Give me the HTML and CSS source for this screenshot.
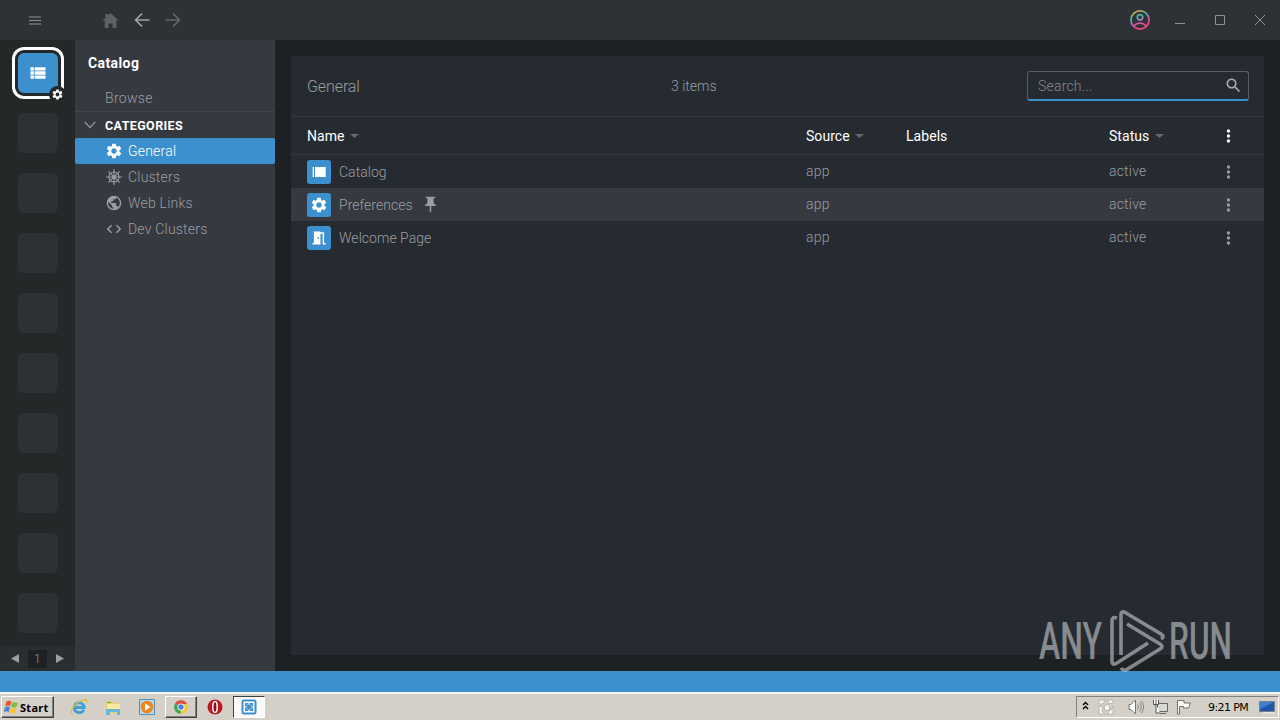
FILE: index.html
```
<!DOCTYPE html>
<html lang="en">
<head>
    <meta charset="UTF-8">
    <title>Catalog</title>
    <link rel="stylesheet" href="styles.css">
</head>
<body>
    <svg class="sprite">
        <symbol id="gear" viewBox="1.500 1.500 21 21"><path d="M19.14 12.94c.04-.3.06-.61.06-.94 0-.32-.02-.64-.07-.94l2.03-1.58c.18-.14.23-.41.12-.61l-1.92-3.32c-.12-.22-.37-.29-.59-.22l-2.39.96c-.5-.38-1.03-.7-1.62-.94l-.36-2.54c-.04-.24-.24-.41-.48-.41h-3.84c-.24 0-.43.17-.47.41l-.36 2.54c-.59.24-1.13.57-1.62.94l-2.39-.96c-.22-.08-.47 0-.59.22L2.74 8.87c-.12.21-.08.47.12.61l2.03 1.58c-.05.3-.09.63-.09.94s.02.64.07.94l-2.03 1.58c-.18.14-.23.41-.12.61l1.92 3.32c.12.22.37.29.59.22l2.39-.96c.5.38 1.03.7 1.62.94l.36 2.54c.05.24.24.41.48.41h3.84c.24 0 .44-.17.47-.41l.36-2.54c.59-.24 1.13-.56 1.62-.94l2.39.96c.22.08.47 0 .59-.22l1.92-3.32c.12-.22.07-.47-.12-.61l-2.01-1.58zM12 15.6c-1.98 0-3.6-1.62-3.6-3.6s1.62-3.6 3.6-3.6 3.6 1.62 3.6 3.6-1.62 3.6-3.6 3.6z"/></symbol>
        <symbol id="list" viewBox="0 0 24 24"><path d="M3 14h4v-4H3v4zm0 5h4v-4H3v4zM3 9h4V5H3v4zm5 5h13v-4H8v4zm0 5h13v-4H8v4zM8 5v4h13V5H8z"/></symbol>
        <symbol id="dots" viewBox="0 0 24 24"><circle cx="12.700" cy="4.500" r="2.500"/><circle cx="12.700" cy="12" r="2.500"/><circle cx="12.700" cy="19.500" r="2.500"/></symbol>
        <symbol id="sort" viewBox="0 0 9 4"><path d="M0 0h9L4.500 4z"/></symbol>
    </svg>

    <header class="topbar">
        <svg class="menu" viewBox="0 0 12 9"><path d="M0 1h12M0 4.500h12M0 8h12"/></svg>
        <svg class="home" viewBox="0 0 16 15"><path d="M8 0l8 7.500h-2.200V15H10v-4.500H6V15H2.200V7.500H0L3 4.700V1h2.500v1.400z"/></svg>
        <svg class="arrow" viewBox="0 0 16 14"><path d="M8 .6L1.500 7 8 13.400M1.500 7H15.500"/></svg>
        <svg class="arrow off" viewBox="0 0 16 14"><path d="M8 .6L14.500 7 8 13.400M14.500 7H.5"/></svg>
        <div class="window-buttons">
            <svg class="user" viewBox="0 0 20 20">
                <defs>
                    <linearGradient id="rainbow" x1="4" y1="0" x2="12" y2="20" gradientUnits="userSpaceOnUse">
                        <stop offset="0" stop-color="#e0a050"/>
                        <stop offset=".15" stop-color="#b9a860"/>
                        <stop offset=".35" stop-color="#35b5a5"/>
                        <stop offset=".55" stop-color="#a777b5"/>
                        <stop offset=".8" stop-color="#f23f8c"/>
                        <stop offset="1" stop-color="#f04d75"/>
                    </linearGradient>
                </defs>
                <circle cx="10" cy="10" r="9.100"/>
                <circle cx="10" cy="7.300" r="2.700"/>
                <path d="M3.800 15.800c3.400-3.600 9-3.600 12.400 0"/>
            </svg>
            <svg class="win" viewBox="0 0 12 12"><path d="M1 9.500h10"/></svg>
            <svg class="win" viewBox="0 0 12 12"><path d="M1.500 1.500h9v9h-9z"/></svg>
            <svg class="win" viewBox="0 0 12 12"><path d="M1 1l10 10M11 1L1 11"/></svg>
        </div>
    </header>

    <div class="middle">
        <aside class="hotbar">
            <div class="cells">
                <div class="cell active">
                    <svg><use href="#list"/></svg>
                    <span class="badge"><svg><use href="#gear"/></svg></span>
                </div>
                <div class="cell"></div>
                <div class="cell"></div>
                <div class="cell"></div>
                <div class="cell"></div>
                <div class="cell"></div>
                <div class="cell"></div>
                <div class="cell"></div>
                <div class="cell"></div>
                <div class="cell"></div>
            </div>
            <div class="pager">
                <svg viewBox="0 0 8 9"><path d="M8 0v9L0 4.500z"/></svg>
                <span>1</span>
                <svg viewBox="0 0 8 9"><path d="M0 0v9l8-4.500z"/></svg>
            </div>
        </aside>

        <nav class="sidebar">
            <h2>Catalog</h2>
            <div class="browse">Browse</div>
            <div class="group">
                <svg viewBox="0 0 12 8"><path d="M.8 1L6 6.500 11.200 1"/></svg>
                <span>CATEGORIES</span>
            </div>
            <div class="item selected"><svg><use href="#gear"/></svg><span>General</span></div>
            <div class="item">
                <svg class="wheel" viewBox="0 0 24 24">
                    <circle cx="12" cy="12" r="7.500"/>
                    <circle cx="12" cy="12" r="1.800"/>
                    <path d="M12 0v24M0 12h24M3.500 3.500l17 17M20.500 3.500l-17 17"/>
                </svg>
                <span>Clusters</span>
            </div>
            <div class="item">
                <svg viewBox="1 1 22 22"><path d="M12 2C6.480 2 2 6.480 2 12s4.480 10 10 10 10-4.480 10-10S17.520 2 12 2zm-1 17.930c-3.950-.49-7-3.850-7-7.930 0-.62.08-1.210.21-1.790L9 15v1c0 1.100.9 2 2 2v1.930zm6.900-2.540c-.26-.81-1-1.390-1.900-1.390h-1v-3c0-.55-.45-1-1-1H8v-2h2c.55 0 1-.45 1-1V7h2c1.100 0 2-.9 2-2v-.41c2.930 1.190 5 4.060 5 7.410 0 2.080-.8 3.970-2.100 5.390z"/></svg>
                <span>Web Links</span>
            </div>
            <div class="item">
                <svg viewBox="1 1 22 22"><path d="M9.400 16.600L4.800 12l4.600-4.600L8 6l-6 6 6 6 1.400-1.400zm5.200 0l4.600-4.600-4.600-4.600L16 6l6 6-6 6-1.400-1.400z"/></svg>
                <span>Dev Clusters</span>
            </div>
        </nav>

        <main class="content">
            <div class="panel">
                <div class="panel-head">
                    <h1>General</h1>
                    <span class="count">3 items</span>
                    <label class="search">
                        <input type="text" placeholder="Search...">
                        <svg viewBox="1 1 22 22"><path d="M15.500 14h-.79l-.28-.27C15.410 12.590 16 11.110 16 9.500 16 5.910 13.090 3 9.500 3S3 5.910 3 9.500 5.910 16 9.500 16c1.610 0 3.090-.59 4.230-1.570l.27.28v.79l5 4.990L20.490 19l-4.990-5zm-6 0C7.010 14 5 11.990 5 9.500S7.010 5 9.500 5 14 7.010 14 9.500 11.990 14 9.500 14z"/></svg>
                    </label>
                </div>
                <div class="row head">
                    <div>Name <svg class="sort"><use href="#sort"/></svg></div>
                    <div>Source <svg class="sort"><use href="#sort"/></svg></div>
                    <div>Labels</div>
                    <div>Status <svg class="sort"><use href="#sort"/></svg></div>
                    <svg class="dots"><use href="#dots"/></svg>
                </div>
                <div class="row">
                    <div class="name">
                        <span class="tile"><svg viewBox="0 0 24 24"><path d="M2.500 4.500h2v15h-2zM6 4.500h16v15H6z"/></svg></span>
                        Catalog
                    </div>
                    <div class="value">app</div>
                    <div></div>
                    <div class="value">active</div>
                    <svg class="dots"><use href="#dots"/></svg>
                </div>
                <div class="row hover">
                    <div class="name">
                        <span class="tile"><svg><use href="#gear"/></svg></span>
                        Preferences
                        <svg class="pin" viewBox="1 1 22 22"><path d="M16 9V4h2V2H6v2h2v5c0 1.660-1.340 3-3 3v2h5.970v7l1 1 1-1v-7H19v-2c-1.660 0-3-1.340-3-3z"/></svg>
                    </div>
                    <div class="value">app</div>
                    <div></div>
                    <div class="value">active</div>
                    <svg class="dots"><use href="#dots"/></svg>
                </div>
                <div class="row">
                    <div class="name">
                        <span class="tile"><svg viewBox="1 1 22 22"><path d="M14 6v15H3v-2h2V3h9v1h5v15h2v2h-4V6h-3zm-4 5v2h2v-2h-2z"/></svg></span>
                        Welcome Page
                    </div>
                    <div class="value">app</div>
                    <div></div>
                    <div class="value">active</div>
                    <svg class="dots"><use href="#dots"/></svg>
                </div>
            </div>
        </main>
    </div>

    <div class="statusbar"></div>

    <footer class="taskbar">
        <button class="start">
            <svg viewBox="0 0 16 16">
                <path fill="#e8562a" d="M2.500 2.500C4.500 1 6 1.200 7.800 2.200L6.500 7.200C4.800 6.200 3.200 6.200 1.200 7.500z"/>
                <path fill="#7dbb3c" d="M8.800 2.600c2 1 3.800 1 6 .2l-1.400 5c-2 .9-3.900.8-5.900-.2z"/>
                <path fill="#4384d8" d="M1 8.500c2-1.300 3.600-1.200 5.300-.2L5 13.200C3.200 12.200 1.700 12.200-.2 13.500z"/>
                <path fill="#f9c529" d="M7.300 8.700c2 1 3.900 1.100 5.900.3l-1.400 5c-2 .9-3.900.7-5.800-.3z"/>
            </svg>
            Start
        </button>
        <div class="tasks">
            <div class="task">
                <svg viewBox="0 0 18 18">
                    <path fill="none" stroke="#3f9fd8" stroke-width="2.800" d="M4.500 9.500h9.800C14 3.500 4.500 3 4.300 9.500c0 6 7.700 6.500 9.500 2.200"/>
                    <path fill="none" stroke="#e4b93c" stroke-width="1.300" d="M2.500 16C-1 15 4 4 14 1.800c3-.6 3.300 1 2.300 3"/>
                </svg>
            </div>
            <div class="task">
                <svg viewBox="0 0 18 18">
                    <path fill="#e9cf6b" d="M2 3h6l1 2h6v10H2z"/>
                    <path fill="#f8e9a2" d="M3 6h13v6H3z"/>
                    <path fill="#67b345" d="M3 4h4v1H3z"/>
                    <path fill="#68b8da" d="M2 11h14v6h-3v-3H6v3H2z"/>
                </svg>
            </div>
            <div class="task">
                <svg viewBox="0 0 18 18">
                    <path fill="#b9d9ed" stroke="#4d91bd" d="M1.500 1.500h15v15h-15z"/>
                    <circle cx="9" cy="9" r="6.300" fill="#ee851c"/>
                    <path fill="#fff" d="M7 5.300v7.400L12.500 9z"/>
                </svg>
            </div>
            <div class="task raised">
                <svg viewBox="0 0 18 18">
                    <path fill="#df4b3c" d="M9 9L3 5.500A7 7 0 0 1 15.200 6H9z"/>
                    <path fill="#44a552" d="M9 9v7A7 7 0 0 1 3 5.500z"/>
                    <path fill="#f5c93a" d="M9 9V6h6.200A7 7 0 0 1 8.500 16z"/>
                    <circle cx="9" cy="9" r="3.500" fill="#fff"/>
                    <circle cx="9" cy="9" r="2.700" fill="#4b84e0"/>
                </svg>
            </div>
            <div class="task">
                <svg viewBox="0 0 18 18">
                    <circle cx="9" cy="9" r="7.500" fill="#bd1720"/>
                    <ellipse cx="9" cy="9" rx="2.200" ry="5.500" fill="#8d0d15" stroke="#fff" stroke-width="1.500"/>
                </svg>
            </div>
            <div class="task pressed">
                <svg viewBox="0 0 18 18">
                    <rect x="2.500" y="2.500" width="13" height="13" rx="1.500" fill="#fff" stroke="#3d90ce" stroke-width="2"/>
                    <path fill="#3d90ce" d="M5 5h3l1 1 1-1h3v3l-1 1 1 1v3h-3l-1-1-1 1H5v-3l1-1-1-1z"/>
                    <circle cx="9" cy="9" r="2.800" fill="#3d90ce" stroke="#e6f2fa" stroke-width=".5"/>
                </svg>
            </div>
        </div>
        <div class="tray">
            <svg class="expand" viewBox="0 0 7 9"><path d="M1 4l2.500-2.500L6 4M1 8l2.500-2.500L6 8"/></svg>
            <svg class="mosaic" viewBox="0 0 16 16"><path fill="#f5f5f2" stroke="#aaa89f" stroke-width=".8" d="M1 1h6L5 5H1zM9 1h6v4l-4-1zM1 7l4 1-1 4 3 3H1zM15 7v8H9l2-3 2-1zM6 7l4-2 2 3-1 3-4 1z"/></svg>
            <svg class="sound" viewBox="0 0 16 16"><path fill="#fff" stroke="#77756f" d="M1 5.500h2L7.500 1v14L3 10.500H1z"/><path fill="none" stroke="#88867f" d="M9.500 5.500q2 2.500 0 5M11.500 3.500q3.500 4.500 0 9M13.300 2q4.500 6 0 12"/></svg>
            <svg class="network" viewBox="0 0 16 16"><path fill="#d9d9d5" stroke="#666" d="M5.500 4.500h10v8h-10zM8 14.500h6"/><path fill="#fff" stroke="#555" d="M1.500 1v4.500h5V1M4 1v4M4 5v9h4"/></svg>
            <svg class="flag" viewBox="0 0 16 16"><path fill="#fff" stroke="#716f69" d="M1.500 15V1.500H8V4h6.500l-2 5H7.500V7.500h-4V15z"/></svg>
            <span class="clock">9:21 PM</span>
            <svg class="desktop" viewBox="0 0 16 14"><path fill="#1f57aa" stroke="#777" stroke-width=".7" d="M.5 1.500h15v10H.5z"/><path fill="#3f7fd0" d="M1 2h14L1 9z"/><path fill="#e9e6df" d="M4 12h12v1.500H4z"/></svg>
        </div>
    </footer>

    <svg class="watermark" viewBox="0 0 236 64">
        <text x="0" y="50" textLength="63" lengthAdjust="spacingAndGlyphs">ANY</text>
        <text x="130" y="50" textLength="63" lengthAdjust="spacingAndGlyphs">RUN</text>
        <path d="M78 9q-5-2-5 3v40q0 5 5 2l31-20M82 46V6q0-5 5-2l35 21q4 3 0 5M88 15l33 20q4 3 0 5L87 61q-3 1-5-2"/>
    </svg>
</body>
</html>
```
FILE: styles.css
```
* {
    box-sizing: border-box;
}

body {
    margin: 0;
    width: 1280px;
    height: 720px;
    display: flex;
    flex-direction: column;
    overflow: hidden;
    position: relative;
    background: #1e2124;
    color: #9a9ea4;
    font-family: Roboto, sans-serif;
    font-size: 14px;
    font-weight: 300;
    letter-spacing: 0.2px;
}

svg {
    fill: currentColor;
    flex-shrink: 0;
}

.sprite {
    display: none;
}

/* top bar */
.topbar {
    height: 40px;
    display: flex;
    align-items: center;
    padding: 0 14px 0 29px;
    background: #2e3136;
}

.menu {
    width: 12px;
    height: 9px;
    margin-right: 61px;
    stroke: #8e9297;
}

.home {
    width: 17px;
    height: 15px;
    margin-right: 15px;
    color: #5e6166;
}

.arrow {
    width: 16px;
    height: 14px;
    margin-right: 15px;
    fill: none;
    stroke: #a0a3a8;
    stroke-width: 1.5;
}

.arrow.off {
    stroke: #63666b;
}

.window-buttons {
    display: flex;
    align-items: center;
    margin-left: auto;
}

.user {
    width: 20px;
    height: 20px;
    margin-right: 24px;
    fill: none;
    stroke: url(#rainbow);
    stroke-width: 1.8;
}

.win {
    width: 12px;
    height: 12px;
    margin-left: 28px;
    fill: none;
    stroke: #8e9297;
}

.user + .win {
    margin-left: 0;
}

.middle {
    flex: 1;
    display: flex;
    min-height: 0;
}

/* hotbar */
.hotbar {
    width: 75px;
    display: flex;
    flex-direction: column;
    justify-content: space-between;
    background: #252829;
}

.cells {
    display: flex;
    flex-direction: column;
    align-items: center;
    gap: 20px;
    padding-top: 13px;
}

.cell {
    width: 40px;
    height: 40px;
    border-radius: 6px;
    background: #2d3035;
}

.cell.active {
    position: relative;
    display: flex;
    align-items: center;
    justify-content: center;
    background: #3d90ce;
    color: #fff;
    box-shadow: 0 0 0 3px #252829, 0 0 0 6px #fff;
}

.cell.active svg {
    width: 20px;
    height: 20px;
}

.badge {
    position: absolute;
    right: -8px;
    bottom: -10px;
    width: 17px;
    height: 17px;
    display: flex;
    align-items: center;
    justify-content: center;
    border-radius: 50%;
    background: #252829;
}

.cell.active .badge svg {
    width: 11px;
    height: 11px;
}

.pager {
    height: 25px;
    display: flex;
    align-items: center;
    justify-content: center;
    gap: 9px;
    background: #2b2e31;
}

.pager svg {
    width: 8px;
    height: 9px;
}

.pager span {
    width: 19px;
    line-height: 18px;
    text-align: center;
    font-size: 12px;
    background: #1e2124;
}

/* sidebar */
.sidebar {
    width: 200px;
    background: #36393f;
}

.sidebar h2 {
    margin: 0;
    padding: 13px 13px 0;
    font-size: 14px;
    line-height: 20px;
    font-weight: 700;
    letter-spacing: 0.4px;
    color: #fff;
}

.browse {
    height: 39px;
    padding: 15px 30px 0;
    line-height: 20px;
    letter-spacing: 0.3px;
    border-bottom: 1px solid #414449;
}

.group {
    height: 26px;
    display: flex;
    align-items: center;
    padding-left: 9px;
    gap: 9px;
    font-size: 12.5px;
    font-weight: 700;
    letter-spacing: 0.4px;
    color: #fff;
}

.group svg {
    width: 12px;
    height: 8px;
    fill: none;
    stroke: #8e9297;
    stroke-width: 1.3;
}

.item {
    height: 26px;
    display: flex;
    align-items: center;
    padding-left: 31px;
    gap: 6px;
}

.item svg {
    width: 16px;
    height: 16px;
}

.item .wheel {
    fill: none;
    stroke: currentColor;
    stroke-width: 1.7;
}

.item.selected {
    border-radius: 2px;
    background: #3d90ce;
    color: #fff;
}

/* content */
.content {
    flex: 1;
    padding: 16px;
}

.panel {
    height: 599px;
    background: #262b31;
}

.panel-head {
    height: 61px;
    display: flex;
    align-items: center;
    padding: 0 15px 0 16px;
    border-bottom: 1px solid #34383e;
    letter-spacing: 0;
}

.panel-head h1 {
    width: 364px;
    margin: 0;
    font-size: 16px;
    font-weight: 300;
    letter-spacing: -0.1px;
}

.search {
    width: 222px;
    height: 30px;
    display: flex;
    align-items: center;
    margin-left: auto;
    padding: 0 6px 0 10px;
    border: 1px solid #5a5d63;
    border-bottom: 2px solid #3d90ce;
    border-radius: 3px;
}

.search input {
    flex: 1;
    min-width: 0;
    padding: 0;
    border: 0;
    outline: 0;
    background: none;
    font: inherit;
    letter-spacing: 0.2px;
}

.search input::placeholder {
    color: #858990;
}

.search svg {
    width: 17px;
    height: 17px;
    color: #a8abb0;
}

.row {
    height: 33px;
    display: grid;
    grid-template-columns: 499px 100px 203px 111px 16px;
    align-items: center;
    padding-left: 16px;
}

.row.head {
    height: 38px;
    border-bottom: 1px solid #34383e;
    font-weight: 400;
    letter-spacing: 0.05px;
    color: #fff;
}

.row.hover {
    background: #36393f;
}

.value {
    padding-bottom: 2px;
}

.sort {
    width: 9px;
    height: 4px;
    margin-left: 2px;
    vertical-align: 3px;
    color: #65696e;
}

.dots {
    width: 16px;
    height: 16px;
}

.name {
    display: flex;
    align-items: center;
    letter-spacing: 0.03px;
}

.tile {
    width: 24px;
    height: 24px;
    display: flex;
    align-items: center;
    justify-content: center;
    margin-right: 8px;
    border-radius: 3px;
    background: #3d90ce;
    color: #fff;
}

.tile svg {
    width: 16px;
    height: 16px;
}

.pin {
    width: 17px;
    height: 17px;
    margin-left: 9px;
}

/* bottom */
.statusbar {
    height: 21px;
    background: #3d90ce;
}

.taskbar {
    height: 28px;
    display: flex;
    align-items: center;
    padding: 0 1px;
    border-top: 2px solid #f5f4f0;
    background: #d4d0c8;
    color: #000;
    font-family: "DejaVu Sans", sans-serif;
    font-weight: 400;
    letter-spacing: 0;
}

.start {
    width: 53px;
    height: 22px;
    display: flex;
    align-items: center;
    gap: 1px;
    padding: 0 0 0 2px;
    border: 1px solid;
    border-color: #fff #404040 #404040 #fff;
    box-shadow: inset -1px -1px #808080;
    background: #d4d0c8;
    font: bold 11px "Noto Sans", sans-serif;
    letter-spacing: 0.3px;
    white-space: nowrap;
}

.start svg {
    width: 15px;
    height: 16px;
}

.tasks {
    display: flex;
    margin-left: 9px;
    gap: 2px;
}

.task {
    width: 32px;
    height: 22px;
    display: flex;
    align-items: center;
    justify-content: center;
}

.task svg {
    width: 18px;
    height: 18px;
}

.task.raised {
    border: 1px solid;
    border-color: #fff #404040 #404040 #fff;
    box-shadow: inset -1px -1px #808080;
}

.task.pressed {
    border: 1px solid;
    border-color: #404040 #fff #fff #404040;
    background: #fbfaf8;
}

.tray {
    width: 203px;
    height: 22px;
    display: flex;
    align-items: center;
    margin-left: auto;
    padding-left: 5px;
    border: 1px solid;
    border-color: #808080 #fff #fff #808080;
}

.tray svg {
    width: 16px;
    height: 16px;
}

.tray .expand {
    width: 7px;
    height: 9px;
    margin: 0 9px 3px 0;
    fill: none;
    stroke: #000;
    stroke-width: 1.4;
}

.mosaic {
    margin-right: 14px;
}

.sound,
.network {
    margin-right: 8px;
}

.clock {
    width: 43px;
    margin: 0 8px 0 16px;
    font-size: 11px;
    letter-spacing: -0.6px;
    white-space: nowrap;
}

.watermark {
    position: absolute;
    left: 1039px;
    top: 609px;
    width: 236px;
    height: 64px;
    opacity: 0.6;
    color: #c8cacc;
}

.watermark text {
    font-family: Roboto, sans-serif;
    font-size: 52px;
    font-weight: 500;
    letter-spacing: 0;
}

.watermark path {
    fill: none;
    stroke: currentColor;
    stroke-width: 3.6;
}
```
